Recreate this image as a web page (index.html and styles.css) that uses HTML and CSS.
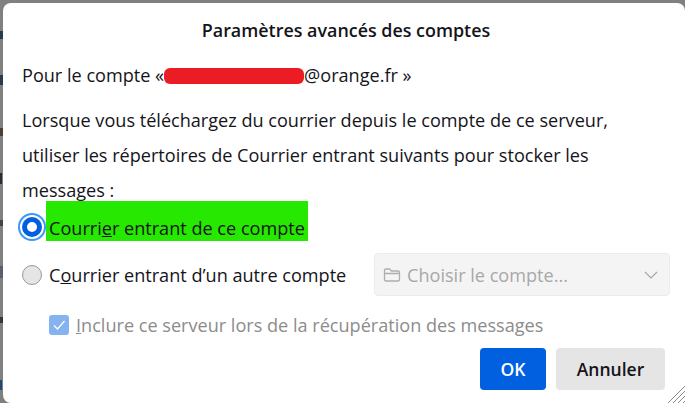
FILE: index.html
```html
<!DOCTYPE html>
<html lang="fr">
<head>
    <meta charset="UTF-8">
    <title>Paramètres avancés des comptes</title>
    <link rel="stylesheet" href="styles.css">
</head>
<body>
    <div class="dialog">
        <h1>Paramètres avancés des comptes</h1>

        <p class="account">Pour le compte «<span class="redacted"></span>@orange.fr »</p>

        <p class="intro">Lorsque vous téléchargez du courrier depuis le compte de ce serveur, utiliser les répertoires de Courrier entrant suivants pour stocker les messages :</p>

        <div class="option option-selected">
            <span class="radio radio-on"></span>
            <span class="highlight">Courri<u>e</u>r entrant de ce compte</span>
        </div>

        <div class="option option-other">
            <span class="radio"></span>
            <span class="option-label">C<u>o</u>urrier entrant d’un autre compte</span>
            <div class="select">
                <svg class="folder" width="18" height="16" viewBox="0 0 18 16">
                    <path d="M1.5 3.5a1.5 1.5 0 0 1 1.5-1.5h3.5l2 2h6.500a1.500 1.500 0 0 1 1.500 1.500v7a1.500 1.500 0 0 1-1.500 1.500h-12a1.500 1.500 0 0 1-1.500-1.500z M1.500 6.500h15.500" fill="none" stroke="#adadad" stroke-width="1.300"/>
                </svg>
                <span class="select-text">Choisir le compte...</span>
                <svg class="chevron" width="14" height="8" viewBox="0 0 14 8">
                    <path d="M1 1l6 6 6-6" fill="none" stroke="#a6a6a6" stroke-width="1.200"/>
                </svg>
            </div>
        </div>

        <div class="include">
            <span class="checkbox">
                <svg width="20" height="20" viewBox="0 0 20 20">
                    <path d="M5 10.500l3.500 3.500 7-8" fill="none" stroke="#fff" stroke-width="1.300"/>
                </svg>
            </span>
            <span><u>I</u>nclure ce serveur lors de la récupération des messages</span>
        </div>

        <div class="buttons">
            <button class="btn btn-primary">OK</button>
            <button class="btn">Annuler</button>
        </div>

        <svg class="grip" width="17" height="18" viewBox="0 0 17 18">
            <path d="M0 18L17 1M5 18L17 6M10 18l7-7M15 18l2-2" stroke="#8a8a8a" stroke-width="1" fill="none"/>
        </svg>
    </div>
</body>
</html>
```

FILE: styles.css
```css
html, body {
    margin: 0;
    padding: 0;
    height: 403px;
    overflow: hidden;
}

body {
    font-family: 'Open Sans', 'Noto Sans', sans-serif;
    color: #15141a;
    padding: 3px 0 0 3px;
    box-sizing: border-box;
    /* bits of the window behind the dialog, cut off at its left edge */
    background-color: #808080;
    background-image:
        linear-gradient(#2b3a4a, #2b3a4a),
        linear-gradient(#2b3a4a, #2b3a4a),
        linear-gradient(#4a4038, #4a4038),
        linear-gradient(#2b2b3a, #2b2b3a),
        linear-gradient(#3a4550, #3a4550),
        linear-gradient(#55606a, #55606a),
        linear-gradient(#3a3530, #3a3530),
        linear-gradient(#1f4a78, #1f4a78);
    background-repeat: no-repeat;
    background-size: 3px 8px, 3px 10px, 3px 8px, 2px 11px, 3px 6px, 3px 12px, 3px 6px, 2px 10px;
    background-position: 0 31px, 0 75px, 0 128px, 0 173px, 0 220px, 0 266px, 0 317px, 0 380px;
}

.dialog {
    position: relative;
    box-sizing: border-box;
    width: 682px;
    height: 400px;
    background: #fff;
    border-radius: 8px 8px 0 8px;
    padding: 0 15px 0 19px;
    font-size: 18.100px;
}

h1 {
    margin: 0;
    padding-top: 14px;
    font-size: 17.900px;
    line-height: 26px;
    font-weight: 600;
    text-align: center;
}

p {
    margin: 0;
}

.account {
    margin-top: 19px;
    line-height: 26px;
}

.redacted {
    display: inline-block;
    width: 140px;
    height: 16px;
    background: #ec1c24;
    border-radius: 6px;
    vertical-align: -2px;
}

.intro {
    margin-top: 15px;
    width: 610px;
    line-height: 35px;
}

.option {
    display: flex;
    align-items: center;
}

.option-selected {
    height: 40px;
    margin-left: -5px;
    margin-top: -7px;
}

.option-other {
    margin-top: 12px;
    height: 43px;
}

.radio {
    box-sizing: border-box;
    flex: none;
    width: 20px;
    height: 20px;
    margin-right: 7px;
    border: 1px solid #999;
    border-radius: 50%;
    background: #e5e5e5;
}

.radio-on {
    width: 20px;
    height: 20px;
    margin: 11px 3px 0 5px;
    background: #fff;
    border: 5px solid #0060df;
    outline: 2px solid #3e97f5;
    outline-offset: 2px;
}

.highlight {
    display: flex;
    align-items: center;
    box-sizing: border-box;
    height: 40px;
    padding: 14px 3px 0 3px;
    background: #27e800;
    margin-left: 1px;
    white-space: pre;
}

.option-label {
    flex: none;
    width: 325px;
}

.select {
    box-sizing: border-box;
    display: flex;
    align-items: center;
    width: 296px;
    height: 43px;
    padding: 0 11px 0 8px;
    background: #f4f4f4;
    border: 1px solid #ececec;
    border-radius: 4px;
    color: #a8a8a8;
}

.select-text {
    flex: 1;
    margin-left: 6px;
}

.include {
    display: flex;
    align-items: center;
    height: 24px;
    margin: 17px 0 0 27px;
    color: #8c8c8c;
}

.checkbox {
    flex: none;
    width: 20px;
    height: 20px;
    margin-right: 7px;
    background: #85b3f0;
    border-radius: 3px;
}

.checkbox svg {
    display: block;
}

.buttons {
    display: flex;
    justify-content: flex-end;
    gap: 10px;
    margin-top: 11px;
    margin-right: 5px;
}

.btn {
    height: 42px;
    width: 109px;
    padding: 0;
    border: none;
    border-radius: 4px;
    background: #e5e5e5;
    color: #15141a;
    font-family: inherit;
    font-size: 17.500px;
    font-weight: 600;
}

.btn-primary {
    width: 66px;
    background: #0060df;
    color: #fff;
}

.grip {
    position: absolute;
    right: 0;
    bottom: 0;
}
```
